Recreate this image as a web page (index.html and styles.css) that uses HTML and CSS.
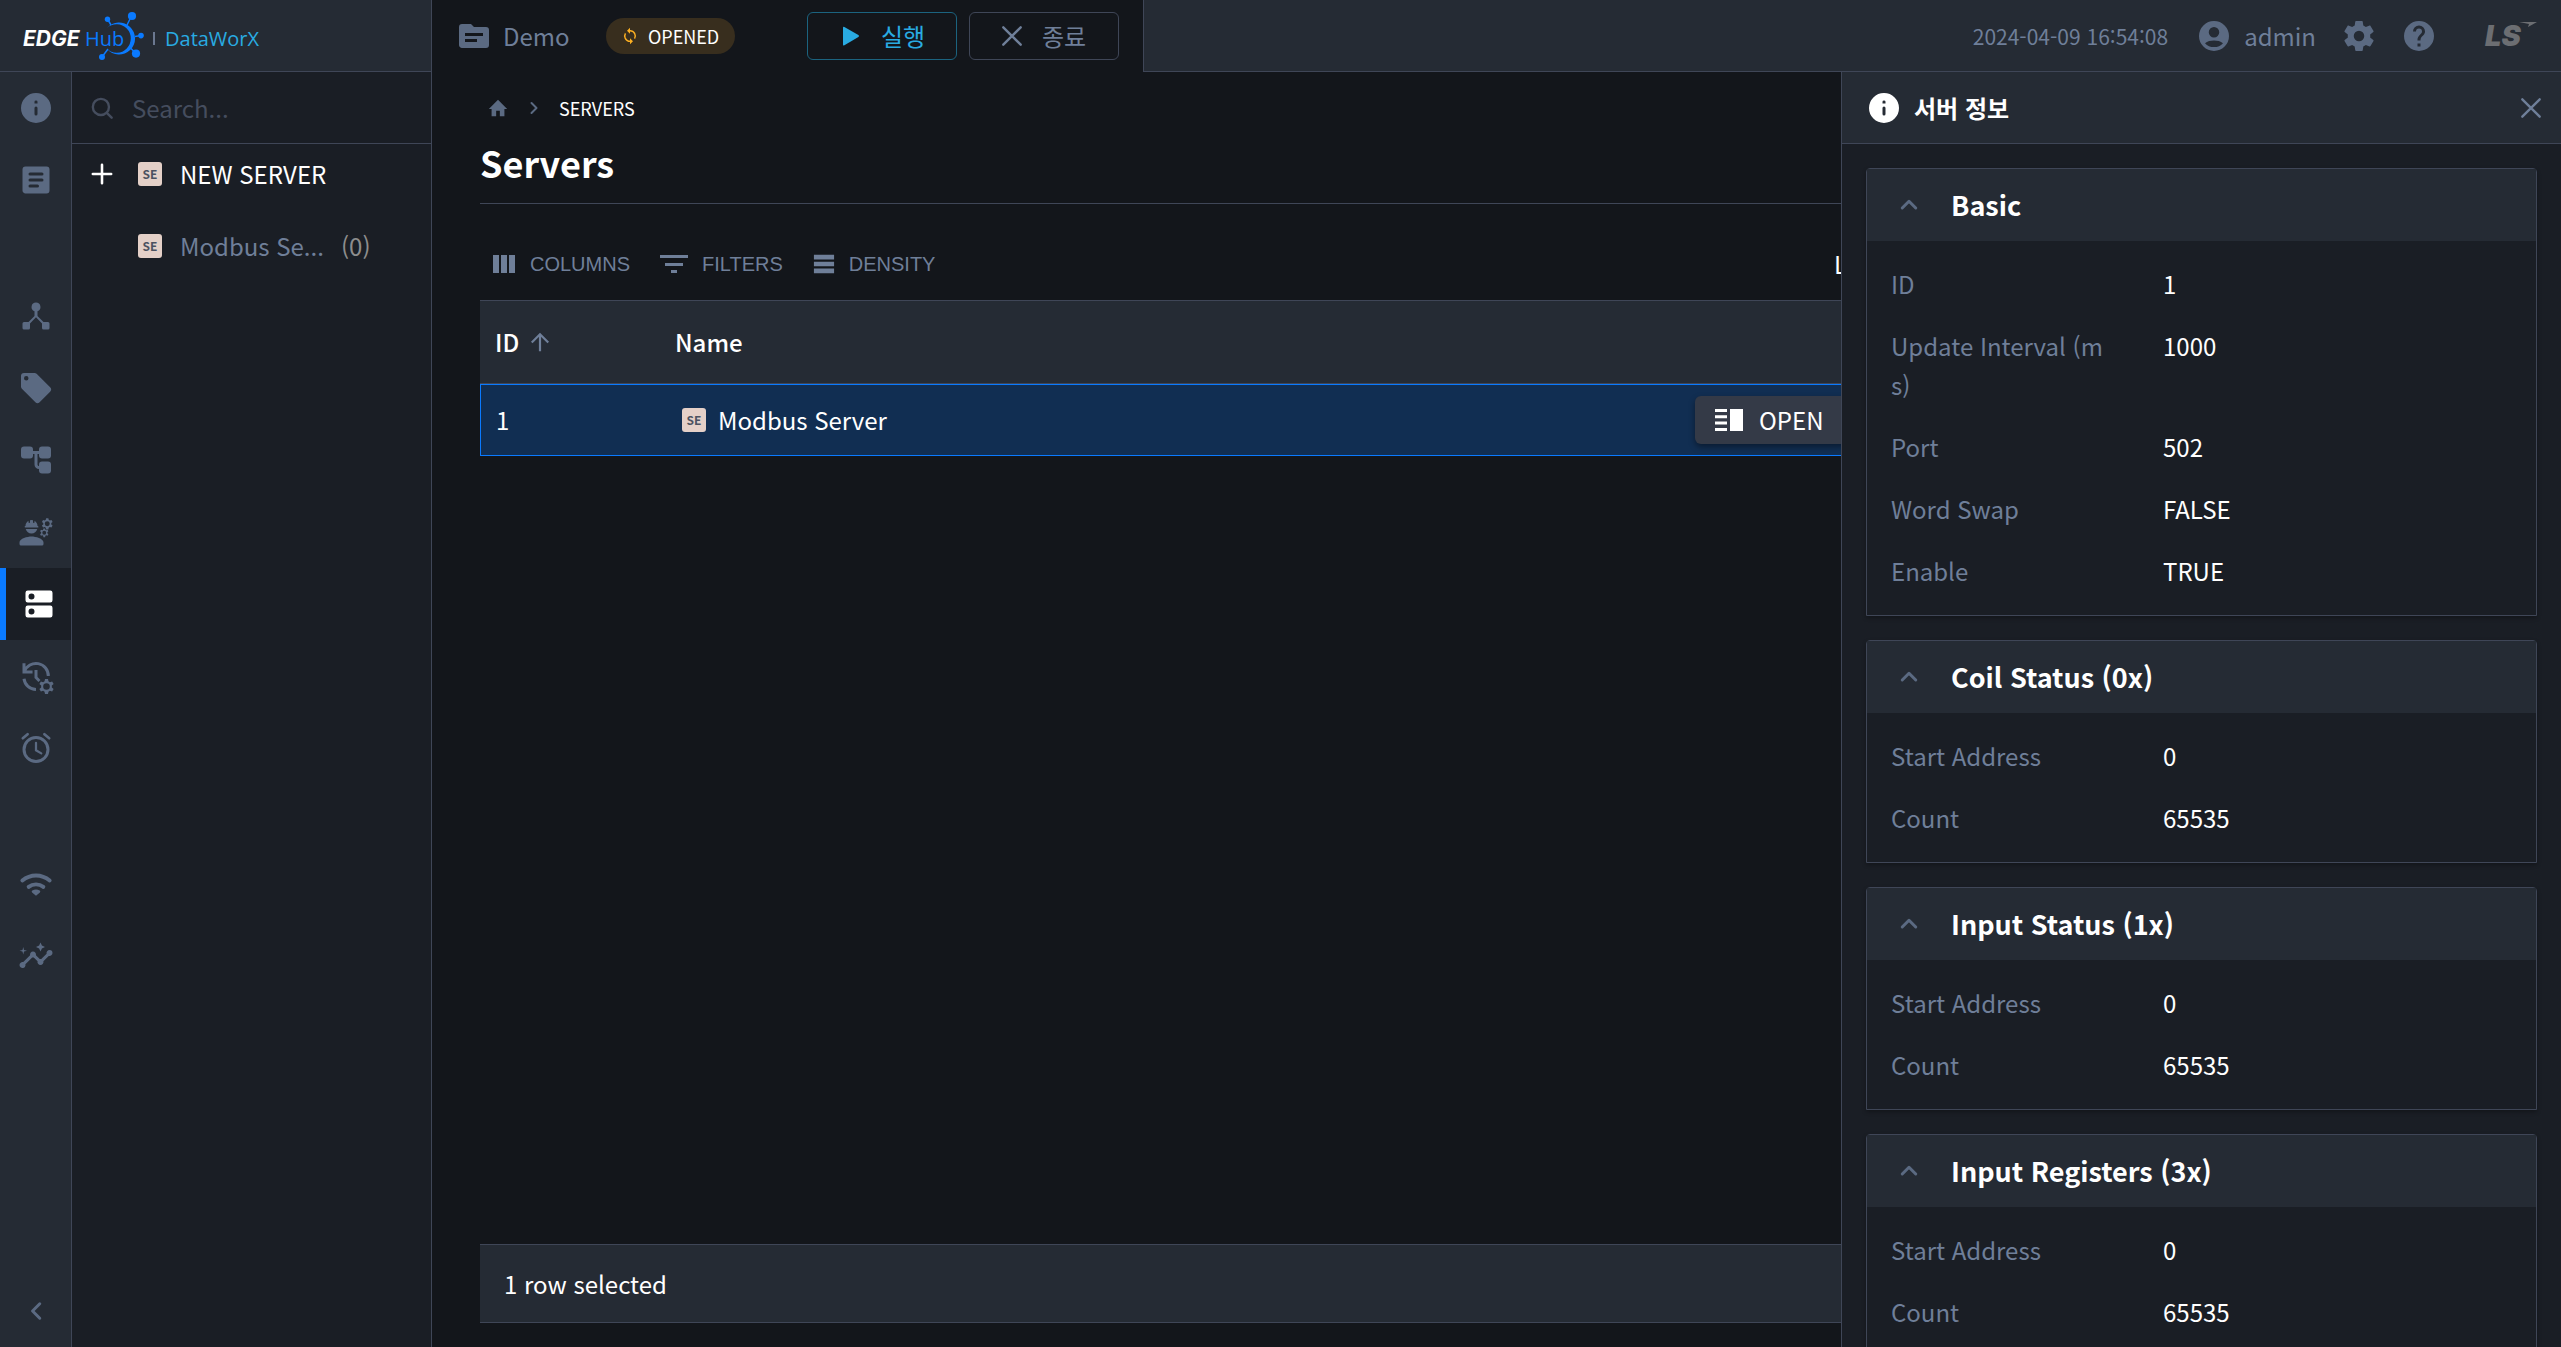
FILE: index.html
```html
<!DOCTYPE html>
<html lang="ko">
<head>
<meta charset="utf-8">
<title>Edge Hub DataWorX</title>
<link rel="stylesheet" href="styles.css">
</head>
<body>
<svg class="defs" aria-hidden="true">
  <symbol id="i-info" viewBox="0 0 24 24"><path fill-rule="evenodd" d="M12 2a10 10 0 1 0 0 20 10 10 0 0 0 0-20zm0 15a1 1 0 0 1-1-1v-4a1 1 0 0 1 2 0v4a1 1 0 0 1-1 1zm-1-8V7.900q0-.9 1-.9t1 .9V9z"/></symbol>
  <symbol id="i-article" viewBox="0 0 24 24"><path fill-rule="evenodd" d="M19 3H5a2 2 0 0 0-2 2v14c0 1.100.9 2 2 2h14a2 2 0 0 0 2-2V5a2 2 0 0 0-2-2zm-6 14H8a1 1 0 0 1 0-2h5a1 1 0 0 1 0 2zm3-4H8a1 1 0 0 1 0-2h8a1 1 0 0 1 0 2zm0-4H8a1 1 0 0 1 0-2h8a1 1 0 0 1 0 2z"/></symbol>
  <symbol id="i-hub" viewBox="0 0 24 24"><path d="m17 16-4-4V8.820A3 3 0 0 0 12 3a3 3 0 0 0-1 5.820V12l-4 4H4a1 1 0 0 0-1 1v3a1 1 0 0 0 1 1h3a1 1 0 0 0 1-1v-2.950l4-4.200 4 4.200V20a1 1 0 0 0 1 1h3a1 1 0 0 0 1-1v-3a1 1 0 0 0-1-1z"/></symbol>
  <symbol id="i-tag" viewBox="0 0 24 24"><path fill-rule="evenodd" d="m21.410 11.580-9-9A2 2 0 0 0 11 2H4a2 2 0 0 0-2 2v7c0 .550.220 1.050.590 1.420l9 9a2 2 0 0 0 2.820 0l7-7a2 2 0 0 0 0-2.840zM5.500 7a1.500 1.500 0 1 1 0-3 1.500 1.500 0 0 1 0 3z"/></symbol>
  <symbol id="i-tree" viewBox="0 0 24 24"><rect x="2" y="3" width="8" height="8" rx="2"/><rect x="14" y="3" width="8" height="8" rx="2"/><rect x="14" y="13" width="8" height="8" rx="2"/><path d="M9 6h6v2h-2v7c0 .550.450 1 1 1h1v2h-1a3 3 0 0 1-3-3V8H9z"/></symbol>
  <symbol id="i-cog-s" viewBox="0 0 24 24"><path fill-rule="evenodd" d="M10 2h4l.600 3.100 1.900 1.100 3-1 2 3.500-2.400 2.100v2.400l2.400 2.100-2 3.500-3-1-1.900 1.100L14 22h-4l-.600-3.100-1.900-1.100-3 1-2-3.500 2.400-2.100v-2.400L2.500 8.700l2-3.500 3 1 1.900-1.100zM12 7.600a4.400 4.400 0 1 0 0 8.800 4.400 4.400 0 0 0 0-8.800z"/></symbol>
  <symbol id="i-engineer" viewBox="0 0 24 24"><path d="M9 15c-2.670 0-8 1.340-8 4v1a1 1 0 0 0 1 1h14a1 1 0 0 0 1-1v-1c0-2.660-5.330-4-8-4zM4.740 9H13.300a.3.3 0 0 0 .250-.500v-.200a.3.3 0 0 0-.250-.300H13c0-1.480-.810-2.750-2-3.450V5.500a.5.5 0 0 1-1 0V4.140a3 3 0 0 0-2 0V5.500a.5.5 0 0 1-1 0v-.950C5.810 5.250 5 6.520 5 8h-.260a.3.3 0 0 0-.300.3v.400a.3.3 0 0 0 .300.300zM9 13c1.860 0 3.410-1.280 3.860-3H5.140c.450 1.720 2 3 3.860 3z"/><use href="#i-cog-s" x="15" y="2" width="9" height="9"/><use href="#i-cog-s" x="14" y="9" width="7" height="7"/></symbol>
  <symbol id="i-server" viewBox="0 0 24 24"><path fill-rule="evenodd" d="M19.500 13h-15A1.500 1.500 0 0 0 3 14.500v5A1.500 1.500 0 0 0 4.500 21h15a1.500 1.500 0 0 0 1.500-1.500v-5a1.500 1.500 0 0 0-1.500-1.500zM7 19a2 2 0 1 1 0-4 2 2 0 0 1 0 4zM19.500 3h-15A1.500 1.500 0 0 0 3 4.500v5A1.500 1.500 0 0 0 4.500 11h15A1.500 1.500 0 0 0 21 9.500v-5A1.500 1.500 0 0 0 19.500 3zM7 9a2 2 0 1 1 0-4 2 2 0 0 1 0 4z"/></symbol>
  <symbol id="i-history" viewBox="0 0 24 24"><g fill="none" stroke="currentColor" stroke-width="2"><path d="M4.300 9A8.200 8.200 0 0 1 20.200 12M4 13.800a8.200 8.200 0 0 0 8 7.200M4 3.500v5.900H9.700"/><path d="M12 8v5l2.300 2.300"/></g><use href="#i-cog-s" x="13" y="13" width="12" height="12"/></symbol>
  <symbol id="i-alarm" viewBox="0 0 24 24"><g fill="none" stroke="currentColor" stroke-width="2"><circle cx="12" cy="13" r="8"/><path d="m3.200 5.500 3.200-2.700M20.800 5.500l-3.200-2.700" stroke-linecap="round" stroke-width="1.800"/><path d="M12 8.500v5l3.500 2.100" stroke-width="1.500" stroke-linecap="round"/></g></symbol>
  <symbol id="i-wifi" viewBox="0 0 24 24"><g fill="none" stroke="currentColor" stroke-width="2.600" stroke-linecap="round"><path d="M2.900 9.700c5.400-4.500 12.800-4.500 18.200 0M7.100 13.900c2.900-2.200 6.900-2.200 9.800 0"/></g><path d="M12 19.800 9.400 17.600c-.4-.5-.3-.9.200-1.200 1.400-.9 3.400-.9 4.800 0 .5.300.6.700.2 1.200z"/></symbol>
  <symbol id="i-insights" viewBox="0 0 24 24"><path d="M21 8a2 2 0 0 0-1.930 2.510l-3.560 3.550a2 2 0 0 0-1.020 0l-2.550-2.550A2 2 0 0 0 10 9a2 2 0 0 0-1.930 2.520l-4.560 4.550A2 2 0 0 0 1 18a2 2 0 1 0 3.930-.520l4.550-4.560c.320.090.700.090 1.020 0l2.550 2.550A2 2 0 0 0 15 18a2 2 0 0 0 1.930-2.520l3.560-3.550A2 2 0 0 0 23 10a2 2 0 0 0-2-2z"/><path d="m15 9 .940-2.070L18 6l-2.060-.930L15 3l-.920 2.070L12 6l2.080.930zM3.500 11 4 9l2-.500L4 8l-.500-2L3 8l-2 .500L3 9z"/></symbol>
  <symbol id="i-left" viewBox="0 0 24 24"><path fill="none" stroke="currentColor" stroke-width="2" stroke-linecap="round" stroke-linejoin="round" d="m14.500 7.200-4.800 4.800 4.800 4.800"/></symbol>
  <symbol id="i-right" viewBox="0 0 24 24"><path fill="none" stroke="currentColor" stroke-width="2" stroke-linecap="round" stroke-linejoin="round" d="m9.500 7 5 5-5 5"/></symbol>
  <symbol id="i-up" viewBox="0 0 24 24"><path fill="none" stroke="currentColor" stroke-width="2" stroke-linecap="round" stroke-linejoin="round" d="m7.500 14 4.500-4.500 4.500 4.500"/></symbol>
  <symbol id="i-search" viewBox="0 0 24 24"><g fill="none" stroke="currentColor" stroke-width="2.600" stroke-linecap="round"><circle cx="10.800" cy="10.800" r="8.800"/><path d="m17.500 17.500 5 5"/></g></symbol>
  <symbol id="i-plus" viewBox="0 0 24 24"><path fill="none" stroke="currentColor" stroke-width="2.800" stroke-linecap="round" d="M12 2v20M2 12h20"/></symbol>
  <symbol id="i-x" viewBox="0 0 24 24"><path fill="none" stroke="currentColor" stroke-width="2.600" stroke-linecap="round" d="m2.500 2.500 19 19M21.500 2.500l-19 19"/></symbol>
  <symbol id="i-folder" viewBox="0 0 24 24"><path fill-rule="evenodd" d="M20 6h-8l-2-2H4a2 2 0 0 0-2 2v12c0 1.100.9 2 2 2h16a2 2 0 0 0 2-2V8a2 2 0 0 0-2-2zm-6 10H6v-2h8zm4-4H6v-2h12z"/></symbol>
  <symbol id="i-sync" viewBox="0 0 24 24"><path d="M12 4V1L8 5l4 4V6a6 6 0 0 1 5.300 8.800l1.460 1.460A8 8 0 0 0 12 4zm0 14a6 6 0 0 1-5.300-8.800L5.240 7.740A8 8 0 0 0 12 20v3l4-4-4-4z"/></symbol>
  <symbol id="i-play" viewBox="0 0 24 24"><path d="M5 3.700q0-1.500 1.400-.7L20.400 11q1.500 1 0 2L6.400 21.200Q5 22 5 20.500z"/></symbol>
  <symbol id="i-user" viewBox="0 0 24 24"><path fill-rule="evenodd" d="M12 2a10 10 0 1 0 0 20 10 10 0 0 0 0-20zm0 4a3.500 3.500 0 1 1 0 7 3.500 3.500 0 0 1 0-7zm0 13.400a8 8 0 0 1-6-2.600c1.600-1.300 3.800-1.800 6-1.800s4.400.5 6 1.800a8 8 0 0 1-6 2.600z"/></symbol>
  <symbol id="i-gear" viewBox="0 0 24 24"><path fill-rule="evenodd" d="M19.500 12c0-.340-.030-.660-.070-1l2.110-1.630c.190-.150.240-.420.120-.640l-2-3.460c-.120-.220-.390-.310-.610-.220l-2.490 1c-.520-.390-1.060-.730-1.690-.980l-.370-2.650A.506.506 0 0 0 14 2h-4c-.250 0-.460.180-.5.420l-.370 2.650c-.630.250-1.170.590-1.690.980l-2.490-1c-.220-.090-.490 0-.610.220l-2 3.460c-.130.220-.070.490.120.640L4.570 11c-.040.340-.070.660-.070 1s.030.650.070.970l-2.110 1.660c-.190.150-.250.420-.120.640l2 3.460c.120.220.390.300.610.220l2.490-1.010c.520.400 1.060.740 1.690.990l.370 2.650c.040.240.250.420.5.420h4c.250 0 .460-.180.5-.420l.370-2.650c.630-.260 1.170-.590 1.690-.990l2.490 1.010c.220.080.490 0 .610-.220l2-3.460c.120-.220.070-.490-.120-.640l-2.110-1.660c.040-.320.070-.630.070-.970zM12 8.500a3.500 3.500 0 1 1 0 7 3.500 3.500 0 0 1 0-7z"/></symbol>
  <symbol id="i-help" viewBox="0 0 24 24"><path fill-rule="evenodd" d="M12 2a10 10 0 1 0 0 20 10 10 0 0 0 0-20zm1 17h-2v-2h2zm2.070-7.750-.9.920C13.450 12.900 13 13.500 13 15h-2v-.5c0-1.100.450-2.100 1.170-2.830l1.240-1.260c.370-.360.590-.860.590-1.410a2 2 0 0 0-4 0H8a4 4 0 0 1 8 0c0 .880-.360 1.680-.930 2.250z"/></symbol>
  <symbol id="i-home" viewBox="0 0 24 24"><path d="M10 21v-6h4v6h5v-8h3L12 3 2 13h3v8z"/></symbol>
  <symbol id="i-columns" viewBox="0 0 24 24"><path d="M1 3h6v18H1zM9 3h6v18H9zM17 3h6v18h-6z"/></symbol>
  <symbol id="i-filter" viewBox="0 0 28 24"><path d="M0 3h28v3H0zM5 11h18v3H5zM11 18h6v3h-6z"/></symbol>
  <symbol id="i-density" viewBox="0 0 24 24"><path d="M1 2h22v5H1zM1 9.500h22v5H1zM1 17h22v5H1z"/></symbol>
  <symbol id="i-arrow" viewBox="0 0 24 24"><path fill="none" stroke="currentColor" stroke-width="2.400" d="M12 22V3.500M3 12.500l9-9 9 9"/></symbol>
  <symbol id="i-open" viewBox="0 0 28 24"><path d="M0 1h12v3H0zM0 7.300h12v3H0zM0 13.600h12v3H0zM0 20h12v3H0zM15 1h13v22H15z"/></symbol>
</svg>

<header class="topbar">
  <a class="brand" href="#" aria-label="EDGE Hub DataWorX">
    <svg class="brand-logo" viewBox="0 0 290 72">
      <text class="logo-edge" x="23" y="46">EDGE</text>
      <text class="logo-hub" x="85" y="46">Hub</text>
      <g fill="#0a7aff"><path d="M107 28A16 16 0 1 1 107 49A14.200 14.200 0 1 0 107 28z"/><circle cx="107.500" cy="19.300" r="2.700"/><circle cx="132" cy="16" r="4.100"/><circle cx="141" cy="35.600" r="2.800"/><circle cx="136" cy="53.600" r="4.100"/><circle cx="102" cy="57" r="3"/></g>
      <path fill="none" stroke="#0a7aff" stroke-width="1.500" d="m107.500 19 3.500 6M131 17l-4 8M135 36.500l6-1M130 47.500l5 5M102 57l6-8"/>
      <path fill="#6b7890" d="M153 32h2v13h-2z"/>
      <text class="logo-product" x="165" y="46">DataWorX</text>
    </svg>
  </a>
  <div class="project">
    <svg class="ic36 dim"><use href="#i-folder"/></svg>
    <span class="project-name">Demo</span>
    <span class="status"><svg class="ic18 amber"><use href="#i-sync"/></svg>OPENED</span>
    <button class="action run" type="button"><svg class="ic24"><use href="#i-play"/></svg>실행</button>
    <button class="action stop" type="button"><svg class="ic22"><use href="#i-x"/></svg>종료</button>
  </div>
  <div class="account">
    <time class="clock">2024-04-09 16:54:08</time>
    <a class="user" href="#"><svg class="ic36"><use href="#i-user"/></svg>admin</a>
    <button class="icon-btn" type="button" aria-label="Settings"><svg class="ic36"><use href="#i-gear"/></svg></button>
    <button class="icon-btn help" type="button" aria-label="Help"><svg class="ic36"><use href="#i-help"/></svg></button>
    <svg class="ls-logo" viewBox="0 0 56 40"><text class="logo-ls" x="2" y="30">LS</text><path d="M36 6h18l-9 5 1-3z" fill="#6c6e72"/></svg>
  </div>
</header>

<div class="workspace">
  <nav class="rail">
    <a href="#" aria-label="Info"><svg class="ic36"><use href="#i-info"/></svg></a>
    <a href="#" aria-label="Log"><svg class="ic36"><use href="#i-article"/></svg></a>
    <a class="group" href="#" aria-label="Drivers"><svg class="ic36"><use href="#i-hub"/></svg></a>
    <a href="#" aria-label="Tags"><svg class="ic36"><use href="#i-tag"/></svg></a>
    <a href="#" aria-label="Model"><svg class="ic36"><use href="#i-tree"/></svg></a>
    <a href="#" aria-label="Engineering"><svg class="ic36"><use href="#i-engineer"/></svg></a>
    <a class="active" href="#" aria-label="Servers"><svg class="ic36"><use href="#i-server"/></svg></a>
    <a href="#" aria-label="History"><svg class="ic36 spill"><use href="#i-history"/></svg></a>
    <a href="#" aria-label="Alarms"><svg class="ic36"><use href="#i-alarm"/></svg></a>
    <a class="group" href="#" aria-label="Network"><svg class="ic36"><use href="#i-wifi"/></svg></a>
    <a href="#" aria-label="Insights"><svg class="ic36"><use href="#i-insights"/></svg></a>
    <button class="collapse" type="button" aria-label="Collapse"><svg class="ic36"><use href="#i-left"/></svg></button>
  </nav>

  <aside class="sidebar">
    <label class="search"><svg class="ic22"><use href="#i-search"/></svg><input type="search" placeholder="Search..." aria-label="Search"></label>
    <ul class="tree">
      <li><button class="tree-item new" type="button"><svg class="ic22"><use href="#i-plus"/></svg><span class="badge">SE</span><span class="tree-name">NEW SERVER</span></button></li>
      <li><a class="tree-item" href="#" title="Modbus Server"><span class="ic22"></span><span class="badge">SE</span><span class="tree-name">Modbus Se...</span><span class="count">(0)</span></a></li>
    </ul>
  </aside>

  <main class="main">
    <div class="content">
      <nav class="crumbs"><a href="#" aria-label="Home"><svg class="ic22"><use href="#i-home"/></svg></a><svg class="ic24"><use href="#i-right"/></svg><span>SERVERS</span></nav>
      <h1>Servers</h1>
      <div class="toolbar">
        <button type="button"><svg class="ic24"><use href="#i-columns"/></svg>COLUMNS</button>
        <button type="button"><svg class="ic28"><use href="#i-filter"/></svg>FILTERS</button>
        <button type="button"><svg class="ic22"><use href="#i-density"/></svg>DENSITY</button>
        <span class="toolbar-end">L</span>
      </div>
      <table class="grid">
        <colgroup><col class="col-id"><col><col class="col-open"></colgroup>
        <thead><tr><th scope="col"><span class="th-label">ID<svg class="ic22 sort"><use href="#i-arrow"/></svg></span></th><th scope="col">Name</th><th></th></tr></thead>
        <tbody><tr><td>1</td><td><span class="cell-name"><span class="badge">SE</span>Modbus Server</span></td><td class="cell-open"><button class="open" type="button"><svg class="ic28"><use href="#i-open"/></svg>OPEN</button></td></tr></tbody>
      </table>
      <footer class="grid-footer">1 row selected</footer>
    </div>
  </main>

  <aside class="panel">
    <div class="panel-head"><svg class="ic36"><use href="#i-info"/></svg><h2>서버 정보</h2><button class="icon-btn" type="button" aria-label="Close"><svg class="ic22"><use href="#i-x"/></svg></button></div>
    <div class="panel-body">
      <section class="card">
        <h3><svg class="ic36"><use href="#i-up"/></svg>Basic</h3>
        <dl><dt>ID</dt><dd>1</dd><dt>Update Interval (ms)</dt><dd>1000</dd><dt>Port</dt><dd>502</dd><dt>Word Swap</dt><dd>FALSE</dd><dt>Enable</dt><dd>TRUE</dd></dl>
      </section>
      <section class="card">
        <h3><svg class="ic36"><use href="#i-up"/></svg>Coil Status (0x)</h3>
        <dl><dt>Start Address</dt><dd>0</dd><dt>Count</dt><dd>65535</dd></dl>
      </section>
      <section class="card">
        <h3><svg class="ic36"><use href="#i-up"/></svg>Input Status (1x)</h3>
        <dl><dt>Start Address</dt><dd>0</dd><dt>Count</dt><dd>65535</dd></dl>
      </section>
      <section class="card">
        <h3><svg class="ic36"><use href="#i-up"/></svg>Input Registers (3x)</h3>
        <dl><dt>Start Address</dt><dd>0</dd><dt>Count</dt><dd>65535</dd></dl>
      </section>
    </div>
  </aside>
</div>
</body>
</html>
```
FILE: styles.css
```css
:root {
  --bar: #252b34;
  --side: #1a1e25;
  --page: #13161b;
  --line: #3f4657;
  --dim: #5b6a82;
  --muted: #6f7f99;
  --blue: #0a7aff;
}
* { box-sizing: border-box; }
body {
  margin: 0;
  height: 100vh;
  display: flex;
  flex-direction: column;
  overflow: hidden;
  background: var(--page);
  color: #fff;
  font: 400 24px/38px "Noto Sans CJK KR", sans-serif;
}
button, input { font: inherit; color: inherit; background: none; border: 0; padding: 0; margin: 0; }
a { color: inherit; text-decoration: none; }
h1, h2, h3, ul, dl, dd { margin: 0; padding: 0; }
svg { fill: currentColor; display: block; flex: none; }
.defs { position: absolute; width: 0; height: 0; }
.ic18 { width: 18px; height: 18px; }
.ic22 { width: 22px; height: 22px; flex: none; }
.ic24 { width: 24px; height: 24px; }
.ic28 { width: 28px; height: 24px; }
.ic36 { width: 36px; height: 36px; }
.dim { color: var(--dim); }
.amber { color: #fdb022; }
.spill, .spill use, #i-history { overflow: visible; }

/* top bar */
.topbar { display: flex; flex: none; height: 72px; }
.brand { flex: none; width: 432px; background: var(--bar); border-right: 1px solid var(--line); border-bottom: 1px solid var(--line); }
.brand-logo { width: 290px; height: 72px; }
.logo-edge { font: italic 700 21px Inter, sans-serif; fill: #fff; }
.logo-hub { font: 400 20px "Open Sans", sans-serif; fill: var(--blue); }
.logo-product { font: 400 20px "Open Sans", sans-serif; fill: #29abe2; }
.project { display: flex; align-items: center; flex: none; padding: 0 24px; }
.project-name { margin-left: 11px; color: var(--muted); }
.status { display: flex; align-items: center; justify-content: center; gap: 9px; width: 129px; height: 36px; margin: 0 72px 0 36px; border-radius: 18px; background: #382e1e; font-size: 18px; }
.action { display: flex; align-items: center; justify-content: center; gap: 19px; width: 150px; height: 48px; border: 1px solid var(--line); border-radius: 6px; font-size: 24px; }
.action + .action { margin-left: 12px; }
.run { color: #29abe2; border-color: #1b637f; }
.stop { color: var(--muted); }
.account { display: flex; flex: 1; align-items: center; justify-content: flex-end; padding-right: 22px; background: var(--bar); border-left: 1px solid var(--line); border-bottom: 1px solid var(--line); color: var(--dim); }
.clock { margin-right: 28px; font-size: 21px; color: var(--muted); }
.user { display: flex; align-items: center; gap: 12px; margin-right: 25px; color: var(--muted); }
.user svg { color: var(--dim); }
.help { margin: 0 46px 0 24px; }
.ls-logo { width: 56px; height: 40px; }
.logo-ls { font: italic 900 29px Inter, sans-serif; fill: #6c6e72; }

/* navigation rail */
.workspace { display: flex; flex: 1; min-height: 0; }
.rail { display: flex; flex: none; flex-direction: column; width: 72px; background: var(--bar); border-right: 1px solid var(--line); color: var(--dim); }
.rail a, .collapse { display: flex; align-items: center; justify-content: center; height: 72px; }
.rail .group { margin-top: 64px; }
.rail .active { background: var(--side); border-left: 6px solid var(--blue); color: #fff; }
.collapse { margin-top: auto; }

/* server list */
.sidebar { flex: none; width: 360px; background: var(--side); border-right: 1px solid var(--line); }
.search { display: flex; align-items: center; gap: 19px; height: 72px; padding: 0 19px; border-bottom: 1px solid var(--line); color: #454d5e; }
.search input { flex: 1; min-width: 0; outline: 0; }
.search input::placeholder { color: #454d5e; opacity: 1; }
.tree { display: flex; flex-direction: column; gap: 12px; list-style: none; }
.tree-item { display: flex; align-items: center; height: 60px; padding-left: 19px; color: var(--muted); }
.new { color: #fff; }
.badge { flex: none; width: 24px; height: 24px; border-radius: 3px; background: #e4d0c8; color: #4b5261; font-size: 12px; font-weight: 700; line-height: 24px; text-align: center; }
.tree .badge { margin: 0 18px 0 25px; }
.tree-name { width: 148px; white-space: nowrap; text-align: left; }
.count { margin-left: 13px; color: #8d8d8d; }

/* main grid */
.main { display: flex; flex: 1; min-width: 0; overflow: hidden; }
.content { display: flex; flex: 1; flex-direction: column; margin: 0 -24px 24px 48px; }
.crumbs { display: flex; align-items: center; gap: 13px; height: 72px; padding-left: 7px; color: var(--dim); }
.crumbs span { color: #fff; font-size: 18px; }
h1 { height: 60px; border-bottom: 1px solid var(--line); font-size: 36px; line-height: 37px; font-weight: 700; }
.toolbar { display: flex; align-items: center; gap: 30px; height: 96px; padding: 24px 18px 0 12px; color: var(--muted); }
.toolbar button { display: flex; align-items: center; gap: 14px; font: 400 20px/32px "Liberation Sans", sans-serif; }
.toolbar-end { margin-left: auto; color: #fff; }
.grid { width: 100%; table-layout: fixed; border-spacing: 0; }
.col-id { width: 180px; }
.col-open { width: 200px; }
th { height: 84px; padding: 0 15px; background: var(--bar); border: solid var(--line); border-width: 1px 0; font-weight: 500; text-align: left; }
.th-label { display: flex; align-items: center; gap: 10px; }
.sort { color: var(--muted); }
td { height: 72px; padding: 0 15px; background: #112e52; border: solid var(--blue); border-width: 1px 0; }
td:first-child { border-left-width: 1px; }
.cell-name { display: flex; align-items: center; gap: 12px; padding-left: 7px; }
td.cell-open { padding: 0 16px 0 0; }
.open { display: flex; align-items: center; gap: 16px; width: 154px; height: 48px; margin-left: auto; padding-left: 20px; border-radius: 6px; background: #343a47; box-shadow: 0 3px 6px rgba(0, 0, 0, .4); }
.grid-footer { height: 79px; margin-top: auto; padding-left: 24px; background: var(--bar); border: solid var(--line); border-width: 1px 0; line-height: 78px; }

/* details panel */
.panel { flex: none; width: 720px; background: var(--side); border-left: 1px solid var(--line); overflow: hidden; }
.panel-head { display: flex; align-items: center; height: 72px; padding: 0 19px 0 24px; background: var(--bar); border-bottom: 1px solid var(--line); }
.panel-head h2 { flex: 1; margin-left: 12px; font-size: 24px; font-weight: 700; }
.panel-head .icon-btn { color: var(--muted); }
.panel-body { display: flex; flex-direction: column; gap: 24px; padding: 24px; }
.card { border: 1px solid var(--line); border-radius: 4px 4px 0 0; box-shadow: 0 2px 4px rgba(0, 0, 0, .3); }
.card h3 { display: flex; align-items: center; gap: 24px; height: 72px; padding-left: 24px; background: var(--bar); font-size: 27px; font-weight: 700; }
.card h3 svg { color: var(--dim); }
.card dl { display: grid; grid-template-columns: 216px 1fr; gap: 23px 56px; padding: 23px 24px 25px; line-height: 39px; }
.card dt { color: var(--muted); word-break: break-all; }
```
